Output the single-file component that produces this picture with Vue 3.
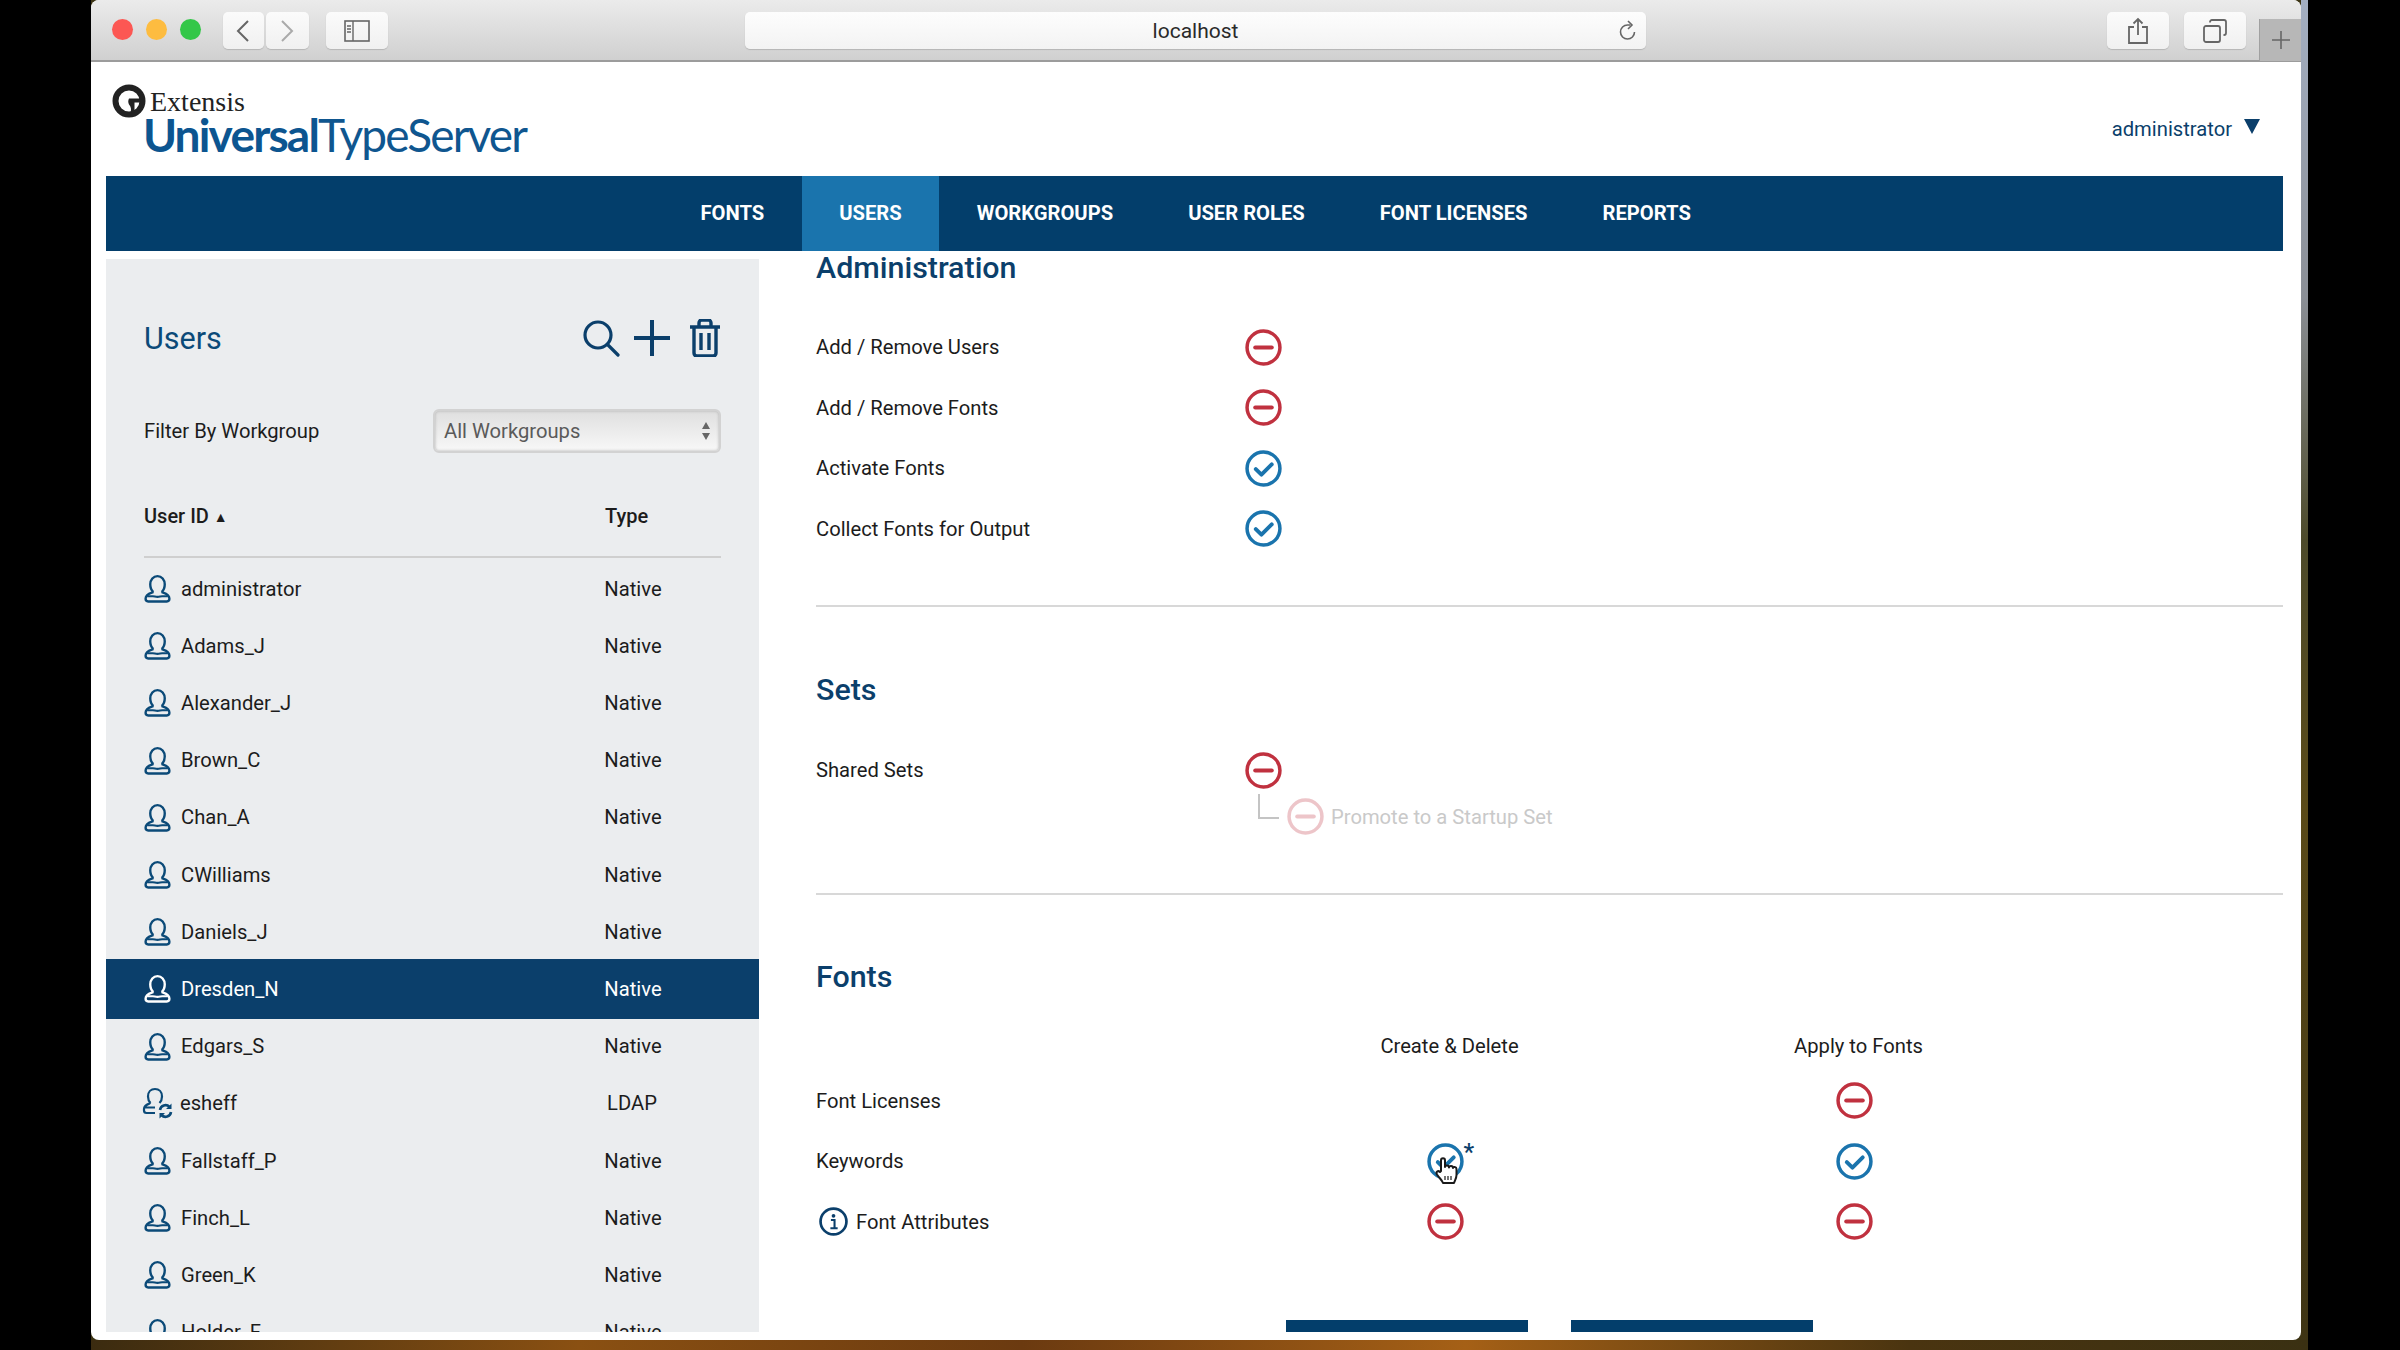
<template>
  <div class="screen">
    <svg class="defs" width="0" height="0">
      <symbol id="minus" viewBox="0 0 36 36">
        <circle cx="18" cy="18" r="16" fill="none" stroke="currentColor" stroke-width="3.400" />
        <path d="M10 18h16" stroke="currentColor" stroke-width="4" stroke-linecap="round" />
      </symbol>
      <symbol id="check" viewBox="0 0 36 36">
        <circle cx="18" cy="18" r="16" fill="none" stroke="currentColor" stroke-width="3.400" />
        <path d="M10.500 18.500l5.500 5.500 10-10" fill="none" stroke="currentColor" stroke-width="3.800" stroke-linecap="round" stroke-linejoin="round" />
      </symbol>
      <symbol id="user" viewBox="0 0 26 28">
        <path d="M9 17.500C6.500 15.500 6 12.500 6 10c0-4.500 3-8 7-8s7 3.500 7 8c0 2.500-.5 5.500-3 7.500" fill="none" stroke="currentColor" stroke-width="2.300" />
        <path d="M9 17.500c-1 .8-7.500 1.500-7.500 6.500 0 1.500 1 2.500 2.500 2.500h18c1.500 0 2.500-1 2.500-2.500 0-5-6.500-5.700-7.500-6.500" fill="none" stroke="currentColor" stroke-width="2.300" />
        <path d="M3 21.500h5.500c1.500 0 2.500.6 4.500.6s3-.6 4.500-.6H23" fill="none" stroke="currentColor" stroke-width="2" />
      </symbol>
      <symbol id="ldap" viewBox="0 0 32 32">
        <path d="M8.500 16C6.500 14 6 11.500 6 9.500 6 5 9 2 13 2s7 3 7 7.500c0 2-.5 4.500-2.500 6.500M8.500 16c-1 .8-6.500 1.500-6.500 6v1.500C2 25 3 26 4.500 26H13M3 20.500h10" fill="none" stroke="currentColor" stroke-width="2.200" />
        <path d="M18 23a5.500 5.500 0 0 1 9.500-3M29 25a5.500 5.500 0 0 1-9.500 3" fill="none" stroke="currentColor" stroke-width="2.600" />
        <path d="M29.500 16.500v5.500h-5.500zM17.500 31.500V26h5.500z" fill="currentColor" />
      </symbol>
    </svg>

    <div class="window">
      <div class="toolbar">
        <span class="light red"></span>
        <span class="light yellow"></span>
        <span class="light green"></span>
        <div class="nav-btns">
          <button class="tool back">
            <svg width="14" height="24" viewBox="0 0 14 24"><path d="M12 2L2 12l10 10" fill="none" stroke="#666" stroke-width="2" /></svg>
          </button>
          <button class="tool fwd">
            <svg width="14" height="24" viewBox="0 0 14 24"><path d="M2 2l10 10L2 22" fill="none" stroke="#aaa" stroke-width="2" /></svg>
          </button>
        </div>
        <button class="tool panel">
          <svg width="26" height="22" viewBox="0 0 26 22"><rect x="1" y="1" width="24" height="20" fill="none" stroke="#666" stroke-width="1.600" /><path d="M9 1v20M3 6h4M3 9h4M3 12h4" fill="none" stroke="#666" stroke-width="1.400" /></svg>
        </button>
        <div class="address">
          <span>localhost</span>
          <svg class="reload" width="20" height="22" viewBox="0 0 20 22"><path d="M16.500 12a7 7 0 1 1-7-7h3" fill="none" stroke="#666" stroke-width="1.600" /><path d="M10 1l4 4-4 4" fill="none" stroke="#666" stroke-width="1.600" /></svg>
        </div>
        <button class="tool share">
          <svg width="22" height="28" viewBox="0 0 22 28"><path d="M7 10H2v16h18V10h-5" fill="none" stroke="#666" stroke-width="1.800" /><path d="M11 18V2M6.500 6.500L11 2l4.500 4.500" fill="none" stroke="#666" stroke-width="1.800" /></svg>
        </button>
        <button class="tool tabs">
          <svg width="24" height="24" viewBox="0 0 24 24"><rect x="1" y="7" width="16" height="16" rx="2" fill="none" stroke="#666" stroke-width="1.800" /><path d="M7 3.500V3c0-1 .8-2 2-2h12c1 0 2 1 2 2v11c0 1-1 2-2 2h-.5" fill="none" stroke="#666" stroke-width="1.800" /></svg>
        </button>
        <div class="newtab">
          <svg width="20" height="20" viewBox="0 0 20 20"><path d="M10 1v18M1 10h18" stroke="#666" stroke-width="1.600" /></svg>
        </div>
      </div>

      <div class="page">
        <header class="top">
          <div class="logo">
            <div class="logo-line">
              <svg class="logo-mark" width="34" height="34" viewBox="0 0 34 34">
                <circle cx="17" cy="17" r="13.500" fill="#fff" stroke="#222" stroke-width="6" />
                <path d="M17 14.500h13v4h-7.500v10h-4c1-3 .5-6-1.500-8-1-2-1-4 0-6z" fill="#222" />
              </svg>
              <span class="extensis">Extensis</span>
            </div>
            <div class="product"><b>Universal</b>TypeServer</div>
          </div>
          <div class="account">
            <span>administrator</span>
            <i class="caret"></i>
          </div>
        </header>

        <nav class="mainnav">
          <a v-for="item in navItems" :key="item" :class="{ active: item === 'USERS' }">{{ item }}</a>
        </nav>

        <div class="columns">
          <aside class="sidebar">
            <div class="side-head">
              <h2>Users</h2>
              <div class="side-icons">
                <svg width="38" height="38" viewBox="0 0 38 38"><circle cx="16" cy="16" r="13" fill="none" stroke="currentColor" stroke-width="3.200" /><path d="M25.500 25.500L36 36" stroke="currentColor" stroke-width="3.200" stroke-linecap="round" /></svg>
                <svg width="38" height="38" viewBox="0 0 38 38"><path d="M19 1v36M1 19h36" stroke="currentColor" stroke-width="4" /></svg>
                <svg class="trash" width="32" height="38" viewBox="0 0 32 38"><path d="M5 9v25c0 1.500 1 3 3 3h16c2 0 3-1.500 3-3V9M1 8h30M10 8V4c0-1.500 1-3 2.500-3h7C21 1 22 2.500 22 4v4M12 14v17M20 14v17" fill="none" stroke="currentColor" stroke-width="3.400" /></svg>
              </div>
            </div>
            <div class="filter">
              <label>Filter By Workgroup</label>
              <div class="select">
                <span>All Workgroups</span>
                <svg width="10" height="22" viewBox="0 0 10 22"><path d="M5 2l4 7H1zM5 20l4-7H1z" fill="#666" /></svg>
              </div>
            </div>
            <div class="list-head">
              <span class="id-col">User ID <small>▲</small></span>
              <span>Type</span>
            </div>
            <ul class="users">
              <li v-for="u in users" :key="u.name" :class="{ selected: u.name === 'Dresden_N' }">
                <svg v-if="u.type === 'LDAP'" class="uicon ldap" viewBox="0 0 32 32"><use href="#ldap" /></svg>
                <svg v-else class="uicon" viewBox="0 0 26 28"><use href="#user" /></svg>
                <span class="uname">{{ u.name }}</span>
                <span class="utype">{{ u.type }}</span>
              </li>
            </ul>
          </aside>

          <main class="content">
            <h3>Administration</h3>
            <div v-for="row in adminRows" :key="row.label" class="perm">
              <span class="perm-label">{{ row.label }}</span>
              <svg class="pi" :class="row.on ? 'on' : 'off'" viewBox="0 0 36 36"><use :href="row.on ? '#check' : '#minus'" /></svg>
            </div>
            <hr class="admin-rule" />

            <h3>Sets</h3>
            <div class="perm sets-row">
              <span class="perm-label">Shared Sets</span>
              <svg class="pi off" viewBox="0 0 36 36"><use href="#minus" /></svg>
            </div>
            <div class="promote">
              <span class="elbow"></span>
              <svg class="pi off faded" viewBox="0 0 36 36"><use href="#minus" /></svg>
              <span>Promote to a Startup Set</span>
            </div>
            <hr class="sets-rule" />

            <h3>Fonts</h3>
            <div class="font-grid">
              <span></span>
              <span class="col-title">Create &amp; Delete</span>
              <span class="col-title">Apply to Fonts</span>

              <span class="perm-label">Font Licenses</span>
              <span></span>
              <span class="cell"><svg class="pi off" viewBox="0 0 36 36"><use href="#minus" /></svg></span>

              <span class="perm-label">Keywords</span>
              <span class="cell">
                <span class="hover-icon">
                  <svg class="pi on" viewBox="0 0 36 36"><use href="#check" /></svg>
                  <sup>*</sup>
                  <svg class="hand" width="24" height="30" viewBox="0 0 24 30">
                    <path d="M7 15V4.500c0-3 4-3 4 0V11c0-2 4-2 4 .5 0-2 4-2 4 .5 0-1.500 3.500-1.500 3.500 1v6c0 3-1.500 5-2.500 8H9c-1-3-3-4-6-8.500-1.500-2.500 1-4.500 3-2.500z" fill="#fff" stroke="#1a1a1a" stroke-width="2" stroke-linejoin="round" />
                    <path d="M11 20v4M14 20v4M17 20v4" stroke="#1a1a1a" stroke-width="1.200" />
                  </svg>
                </span>
              </span>
              <span class="cell"><svg class="pi on" viewBox="0 0 36 36"><use href="#check" /></svg></span>

              <span class="perm-label with-info">
                <svg width="29" height="29" viewBox="0 0 28 28"><circle cx="14" cy="14" r="12.500" fill="none" stroke="#0b3f6b" stroke-width="2.600" /><circle cx="14" cy="8.500" r="1.800" fill="#0b3f6b" /><path d="M11.500 12.500H15V20M11 20.500h7" fill="none" stroke="#0b3f6b" stroke-width="2" /></svg>
                Font Attributes
              </span>
              <span class="cell"><svg class="pi off" viewBox="0 0 36 36"><use href="#minus" /></svg></span>
              <span class="cell"><svg class="pi off" viewBox="0 0 36 36"><use href="#minus" /></svg></span>
            </div>
            <div class="actions">
              <button></button>
              <button></button>
            </div>
          </main>
        </div>
      </div>
    </div>
  </div>
</template>

<script setup>
const navItems = ['FONTS', 'USERS', 'WORKGROUPS', 'USER ROLES', 'FONT LICENSES', 'REPORTS']

const users = [
  { name: 'administrator', type: 'Native' },
  { name: 'Adams_J', type: 'Native' },
  { name: 'Alexander_J', type: 'Native' },
  { name: 'Brown_C', type: 'Native' },
  { name: 'Chan_A', type: 'Native' },
  { name: 'CWilliams', type: 'Native' },
  { name: 'Daniels_J', type: 'Native' },
  { name: 'Dresden_N', type: 'Native' },
  { name: 'Edgars_S', type: 'Native' },
  { name: 'esheff', type: 'LDAP' },
  { name: 'Fallstaff_P', type: 'Native' },
  { name: 'Finch_L', type: 'Native' },
  { name: 'Green_K', type: 'Native' },
  { name: 'Holder_F', type: 'Native' }
]

const adminRows = [
  { label: 'Add / Remove Users', on: false },
  { label: 'Add / Remove Fonts', on: false },
  { label: 'Activate Fonts', on: true },
  { label: 'Collect Fonts for Output', on: true }
]
</script>

<style>
html, body {
  margin: 0;
  background: #000;
}
</style>

<style scoped>
.screen {
  width: 2217px;
  height: 1350px;
  margin-left: 91px;
  padding: 0 7px 10px 0;
  box-sizing: border-box;
  overflow: hidden;
  font-family: Roboto, "Liberation Sans", sans-serif;
  color: #1c1c1c;
  background-color: #3c3414;
  background-image:
    linear-gradient(90deg, #3b2b10, #8a5012 22%, #6b3a10 42%, #a56016 62%, #4a3410 82%, #3a3012),
    linear-gradient(#a4afc2, #8b8f96 22%, #4d4a2a 40%, #5a4a18 60%, #3e3414);
  background-size: 100% 10px, 7px 100%;
  background-position: bottom, right;
  background-repeat: no-repeat;
}
.defs {
  position: absolute;
}
.window {
  height: 1340px;
  background: #fff;
  border-radius: 8px;
  overflow: hidden;
  display: flex;
  flex-direction: column;
}

/* safari bar */
.toolbar {
  height: 62px;
  flex: none;
  box-sizing: border-box;
  display: flex;
  align-items: flex-start;
  background: linear-gradient(#ebebeb, #d0d0d0);
  border-bottom: 2px solid #9c9c9c;
  padding: 12px 0 0 21px;
}
.light {
  width: 21px;
  height: 21px;
  border-radius: 50%;
  margin: 7px 13px 0 0;
}
.red { background: #fc5753; }
.yellow { background: #fdbc40; }
.green { background: #33c748; }
.tool {
  height: 37px;
  padding: 0;
  border: 0;
  border-radius: 5px;
  background: linear-gradient(#fbfbfb, #f0f0f0);
  box-shadow: 0 1px 1px #b5b5b5;
  display: flex;
  align-items: center;
  justify-content: center;
}
.nav-btns {
  display: flex;
  gap: 2px;
  margin-left: 9px;
}
.back { width: 41px; }
.fwd { width: 43px; }
.panel {
  width: 62px;
  margin-left: 17px;
}
.address {
  width: 903px;
  height: 37px;
  margin-left: 357px;
  background: linear-gradient(#fdfdfd, #f3f3f3);
  border-radius: 5px;
  box-shadow: 0 1px 1px #b5b5b5;
  display: flex;
  align-items: center;
  justify-content: center;
  position: relative;
  font-size: 21px;
  color: #2a2a2a;
}
.reload {
  position: absolute;
  right: 8px;
  top: 8px;
}
.share {
  width: 62px;
  margin-left: 461px;
}
.tabs {
  width: 62px;
  margin-left: 15px;
}
.newtab {
  width: 42px;
  height: 42px;
  margin: 7px 0 0 13px;
  background: #b7b7b7;
  border-left: 1px solid #a0a0a0;
  box-sizing: border-box;
  display: flex;
  align-items: center;
  justify-content: center;
}

/* page */
.page {
  flex: 1;
  min-height: 0;
  padding: 0 18px 8px 15px;
  display: flex;
  flex-direction: column;
}
.top {
  height: 114px;
  flex: none;
  display: flex;
  justify-content: space-between;
  align-items: flex-start;
}
.logo {
  padding: 22px 0 0 6px;
}
.logo-line {
  display: flex;
  align-items: center;
  height: 34px;
}
.logo-mark {
  flex: none;
}
.extensis {
  font-family: "Liberation Serif", serif;
  font-size: 28px;
  color: #222;
  margin: 2px 0 0 4px;
}
.product {
  margin: -6px 0 0 31px;
  font-family: Lato, sans-serif;
  font-size: 46px;
  line-height: 46px;
  color: #0f568f;
  font-weight: 400;
  letter-spacing: -1.800px;
}
.product b {
  font-weight: 700;
  color: #0c5590;
}
.account {
  display: flex;
  align-items: center;
  gap: 12px;
  margin: 55px 23px 0 0;
  font-size: 20.200px;
  color: #0b3f6b;
}
.caret {
  width: 0;
  height: 0;
  border-left: 8px solid transparent;
  border-right: 8px solid transparent;
  border-top: 15px solid #0b3f6b;
  margin-top: -5px;
}
.mainnav {
  height: 75px;
  flex: none;
  background: #033e6b;
  display: flex;
  padding-left: 557px;
}
.mainnav a {
  padding: 0 37.500px 2px;
  display: flex;
  align-items: center;
  color: #fff;
  font-size: 20.200px;
  font-weight: 700;
}
.mainnav a.active {
  background: #1a74ad;
}
.columns {
  flex: 1;
  min-height: 0;
  display: flex;
}

/* left list */
.sidebar {
  width: 653px;
  flex: none;
  margin-top: 8px;
  background: #ebedef;
  overflow: hidden;
  padding-top: 47px;
  box-sizing: border-box;
  font-size: 20.200px;
}
.side-head {
  height: 64px;
  padding: 0 38px;
  display: flex;
  align-items: center;
  justify-content: space-between;
}
h2 {
  margin: 0;
  font-size: 30.500px;
  font-weight: 400;
  color: #0b4a78;
}
.side-icons {
  display: flex;
  align-items: center;
  gap: 13px;
  color: #0b3f6b;
}
.trash {
  margin-left: 5px;
}
.filter {
  margin-top: 39px;
  padding: 0 38px;
  display: flex;
  align-items: center;
  justify-content: space-between;
}
.select {
  width: 288px;
  height: 44px;
  box-sizing: border-box;
  padding: 0 8px 0 9px;
  border-radius: 6px;
  border: 2px solid #d2d2d2;
  background: linear-gradient(#dfdfdf, #f8f8f8);
  box-shadow: inset 0 0 3px #b0b0b0;
  display: flex;
  align-items: center;
  justify-content: space-between;
  color: #5a5a5a;
}
.list-head {
  margin: 0 38px;
  height: 105px;
  padding-top: 51px;
  box-sizing: border-box;
  display: flex;
  border-bottom: 2px solid #cfcfcf;
  font-size: 20px;
  font-weight: 500;
  line-height: 24px;
}
.id-col {
  width: 461px;
}
.id-col small {
  font-size: 14px;
  vertical-align: 1px;
}
.users {
  list-style: none;
  margin: 0;
  padding: 2px 0 0;
}
.users li {
  height: 57.200px;
  padding-left: 38px;
  display: flex;
  align-items: center;
  box-sizing: border-box;
}
.users li.selected {
  background: #0b3f6b;
  color: #fff;
  height: 60px;
  margin: -1.400px 0;
}
.uicon {
  width: 27px;
  height: 29px;
  flex: none;
  margin-right: 10px;
  color: #0b4a78;
}
.uicon.ldap {
  width: 32px;
  height: 32px;
  margin: 0 6px 0 -2px;
}
.selected .uicon {
  color: #fff;
}
.uname {
  width: 422px;
  flex: none;
}
.utype {
  width: 60px;
  text-align: center;
}

/* right side */
.content {
  flex: 1;
  min-width: 0;
  padding-left: 57px;
  overflow: hidden;
  font-size: 20.200px;
}
h3 {
  margin: 0;
  height: 34px;
  line-height: 34px;
  font-size: 30.400px;
  font-weight: 500;
  color: #0b3f6b;
}
.perm {
  height: 60.500px;
  display: flex;
  align-items: center;
}
.perm-label {
  width: 429px;
  flex: none;
}
h3 + .perm {
  margin-top: 32px;
}
.pi {
  width: 37px;
  height: 37px;
  display: block;
  flex: none;
}
.pi.off { color: #c0313f; }
.pi.on { color: #1a74ad; }
.pi.faded { opacity: .28; }
hr {
  margin: 0;
  border: 0;
  border-top: 2px solid #d8d8d8;
}
.admin-rule {
  margin: 46px 0 66px;
}
h3 + .sets-row {
  margin-top: 33px;
}
.promote {
  display: flex;
  align-items: center;
  height: 36px;
  margin-top: -2px;
  color: #c9c9c9;
}
.elbow {
  width: 21px;
  height: 25px;
  margin: -20px 8px 0 442px;
  border-left: 2px solid #c4c4c4;
  border-bottom: 2px solid #c4c4c4;
  box-sizing: border-box;
}
.promote .pi {
  margin-right: 7px;
}
.sets-rule {
  margin: 58px 0 65px;
}
.font-grid {
  display: grid;
  grid-template-columns: 520px 218px 600px;
  grid-template-rows: 37px repeat(3, 60.500px);
  margin-top: 40px;
  align-items: center;
}
.col-title {
  text-align: center;
  padding-left: 9px;
  align-self: start;
}
.font-grid .perm-label {
  width: auto;
}
.cell {
  display: flex;
  justify-content: center;
}
.with-info {
  display: flex;
  align-items: center;
  gap: 8px;
  margin-left: 3px;
}
.hover-icon {
  position: relative;
  display: block;
}
.hover-icon sup {
  position: absolute;
  left: 37px;
  top: -4px;
  font-size: 24px;
  font-weight: 500;
  line-height: 26px;
  color: #0b3f6b;
}
.hand {
  position: absolute;
  left: 7px;
  top: 13px;
}
.actions {
  display: flex;
  gap: 43px;
  margin: 68px 0 0 470px;
}
.actions button {
  width: 242px;
  height: 50px;
  flex: none;
  border: 0;
  background: #033e6b;
}
</style>
